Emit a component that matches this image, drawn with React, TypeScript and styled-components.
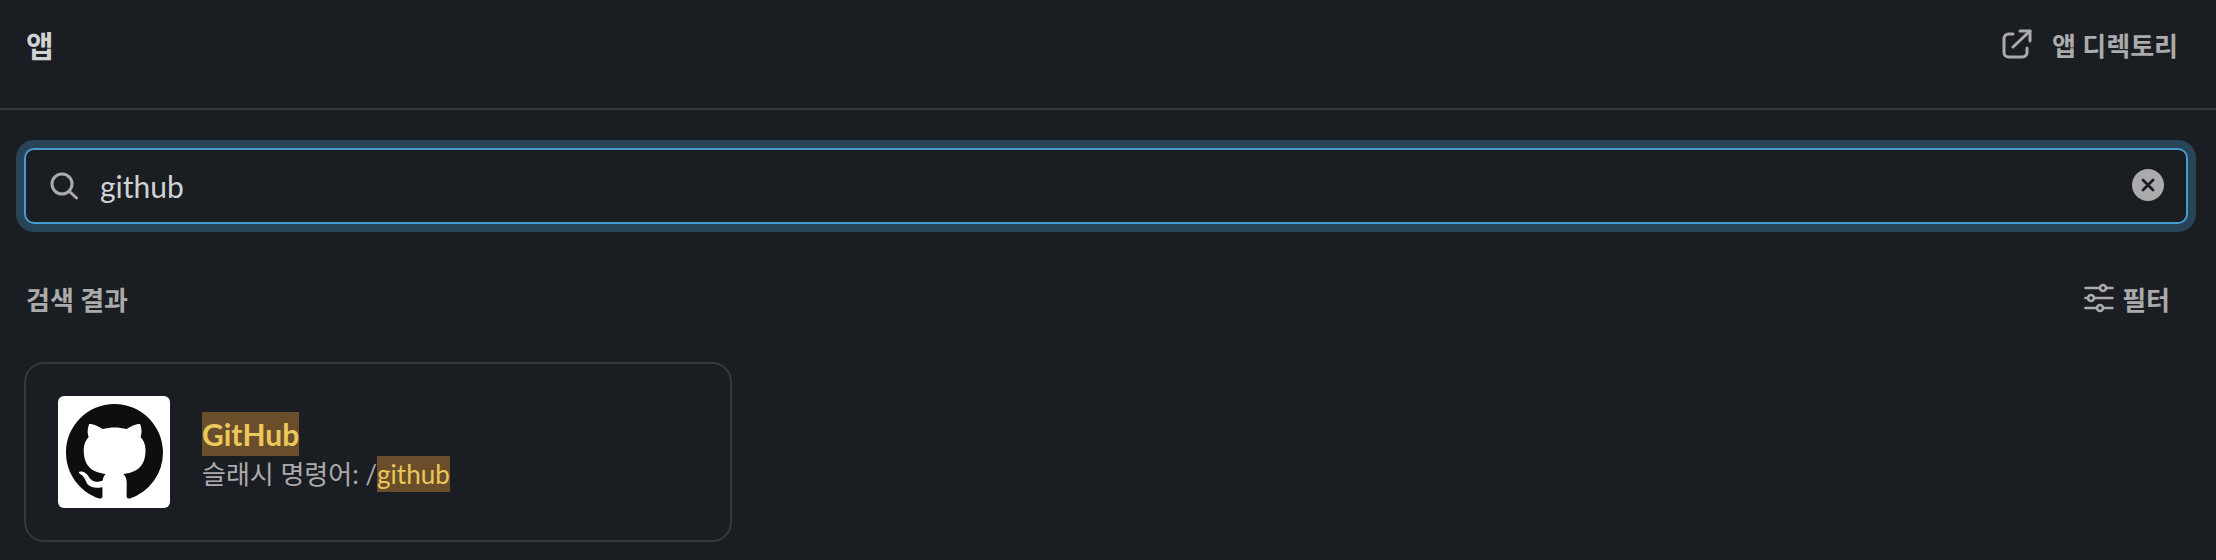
import React from 'react';
import styled, { createGlobalStyle } from 'styled-components';

const FONT = `Lato, "Noto Sans CJK KR", sans-serif`;

const GlobalStyle = createGlobalStyle`
  html, body {
    margin: 0;
    padding: 0;
    background: #1a1d21;
  }
  body {
    font-family: ${FONT};
    color: #d1d2d3;
  }
`;

const Page = styled.div`
  width: 2216px;
  height: 560px;
  overflow: hidden;
  background: #1a1d21;
`;

const Header = styled.header`
  box-sizing: content-box;
  height: 88px;
  border-bottom: 2px solid #36383b;
  display: flex;
  align-items: center;
  justify-content: space-between;
  padding: 0 38px 20px 26px;
`;

const Title = styled.h1`
  margin: 0;
  font-size: 30px;
  font-weight: 700;
  color: #d1d2d3;
`;

const DirectoryLink = styled.a`
  display: flex;
  align-items: center;
  gap: 20px;
  font-size: 26px;
  font-weight: 700;
  color: #ababad;
`;

const SearchRing = styled.div`
  margin: 30px 20px 0 16px;
  padding: 8px;
  border-radius: 18px;
  background: #284457;
`;

const SearchBox = styled.div`
  height: 76px;
  box-sizing: border-box;
  border: 2px solid #479ccf;
  border-radius: 10px;
  background: #1a1d21;
  display: flex;
  align-items: center;
  padding: 0 22px 0 24px;
  gap: 22px;
`;

const SearchValue = styled.div`
  flex: 1;
  font-size: 30px;
  color: #d1d2d3;
`;

const ClearButton = styled.span`
  width: 32px;
  height: 32px;
  border-radius: 50%;
  background: #ababad;
  display: flex;
  align-items: center;
  justify-content: center;
  margin-top: -2px;
`;

const SectionRow = styled.div`
  display: flex;
  align-items: center;
  justify-content: space-between;
  padding: 0 46px 0 26px;
  margin-top: 46px;
  height: 40px;
`;

const SectionLabel = styled.h2`
  margin: 0;
  font-size: 26px;
  font-weight: 700;
  color: #ababad;
`;

const FilterButton = styled.span`
  display: flex;
  align-items: center;
  gap: 8px;
  font-size: 26px;
  font-weight: 700;
  color: #ababad;
`;

const ResultCard = styled.div`
  margin: 44px 0 0 24px;
  width: 708px;
  height: 180px;
  box-sizing: border-box;
  border: 2px solid #36383b;
  border-radius: 20px;
  display: flex;
  align-items: center;
  padding: 0 32px;
  gap: 32px;
`;

const AppLogo = styled.div`
  width: 112px;
  height: 112px;
  flex: none;
  border-radius: 6px;
  background: #fff;
  display: flex;
  align-items: center;
  justify-content: center;
`;

const AppInfo = styled.div`
  display: flex;
  flex-direction: column;
  align-items: flex-start;
`;

const AppName = styled.div`
  font-size: 30px;
  line-height: 44px;
  height: 44px;
  font-weight: 700;
  color: #d1d2d3;
`;

const AppCommand = styled.div`
  font-size: 26px;
  line-height: 36px;
  height: 36px;
  color: #ababad;
`;

const Match = styled.mark`
  display: inline-block;
  background: #6a4d2a;
  color: #ecc85c;
`;

const ExternalIcon = () => (
  <svg width="30" height="30" viewBox="0 0 30 30" fill="none" stroke="#ababad" strokeWidth="3" strokeLinecap="round" strokeLinejoin="round">
    <path d="M11 5H6.500A4.500 4.500 0 0 0 2 9.500v14A4.500 4.500 0 0 0 6.500 28h14a4.500 4.500 0 0 0 4.500-4.500V19" />
    <path d="M11 18 28 2" />
    <path d="M18 2h10v10" />
  </svg>
);

const SearchIcon = () => (
  <svg width="28" height="28" viewBox="0 0 28 28" fill="none" stroke="#ababad" strokeWidth="3" strokeLinecap="round">
    <circle cx="12" cy="12" r="10" />
    <path d="M19.500 19.500 26.500 26" />
  </svg>
);

const CloseIcon = () => (
  <svg width="14" height="14" viewBox="0 0 14 14" fill="none" stroke="#1a1d21" strokeWidth="2.800" strokeLinecap="round">
    <path d="M2 2l10 10M12 2 2 12" />
  </svg>
);

const FilterIcon = () => (
  <svg width="30" height="30" viewBox="0 0 30 30" fill="none" stroke="#ababad" strokeWidth="2.600" strokeLinecap="round">
    <path d="M1.500 5H16M22 5h6.500M1.500 15H4M10 15h18.500M1.500 25H13M19 25h9.500" />
    <circle cx="19" cy="5" r="3" />
    <circle cx="7" cy="15" r="3" />
    <circle cx="16" cy="25" r="3" />
  </svg>
);

const GithubMark = () => (
  <svg width="97" height="97" viewBox="0 0 16 16" fill="#0f0e0e">
    <path d="M8 0C3.580 0 0 3.580 0 8c0 3.540 2.290 6.530 5.470 7.590.4.070.550-.170.550-.380 0-.190-.010-.820-.010-1.490-2.010.370-2.530-.490-2.690-.940-.090-.230-.480-.940-.820-1.130-.280-.150-.680-.520-.010-.530.630-.010 1.080.580 1.230.820.720 1.210 1.870.870 2.330.660.070-.520.280-.870.510-1.070-1.780-.2-3.640-.890-3.640-3.950 0-.870.310-1.590.820-2.150-.080-.2-.360-1.020.080-2.120 0 0 .670-.210 2.200.820.640-.180 1.320-.270 2-.270.680 0 1.360.090 2 .270 1.530-1.040 2.200-.820 2.200-.820.440 1.100.160 1.920.080 2.120.510.560.820 1.270.820 2.150 0 3.070-1.870 3.750-3.650 3.950.290.250.540.730.540 1.480 0 1.070-.010 1.930-.010 2.200 0 .210.150.460.550.380A8.013 8.013 0 0016 8c0-4.420-3.580-8-8-8z" />
  </svg>
);

export default function App() {
  return (
    <Page>
      <GlobalStyle />
      <Header>
        <Title>앱</Title>
        <DirectoryLink>
          <ExternalIcon />
          앱 디렉토리
        </DirectoryLink>
      </Header>
      <SearchRing>
        <SearchBox>
          <SearchIcon />
          <SearchValue>github</SearchValue>
          <ClearButton>
            <CloseIcon />
          </ClearButton>
        </SearchBox>
      </SearchRing>
      <SectionRow>
        <SectionLabel>검색 결과</SectionLabel>
        <FilterButton>
          <FilterIcon />
          필터
        </FilterButton>
      </SectionRow>
      <ResultCard>
        <AppLogo>
          <GithubMark />
        </AppLogo>
        <AppInfo>
          <AppName>
            <Match>GitHub</Match>
          </AppName>
          <AppCommand>
            슬래시 명령어: /<Match>github</Match>
          </AppCommand>
        </AppInfo>
      </ResultCard>
    </Page>
  );
}
